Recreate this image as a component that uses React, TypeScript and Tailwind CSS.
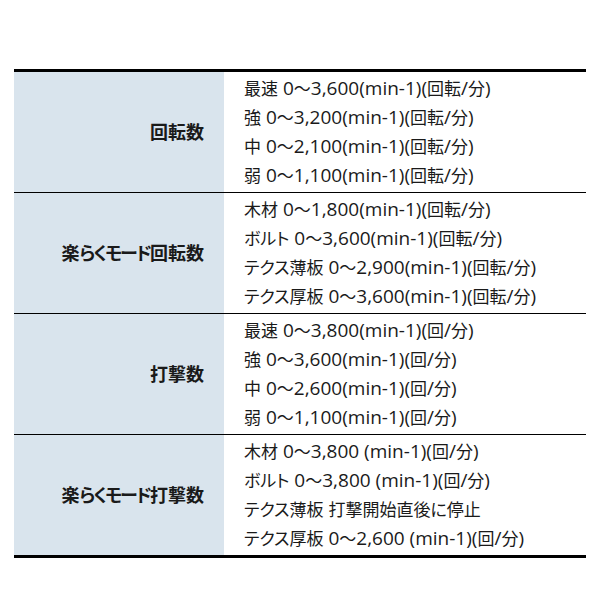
const ROWS = [
  {
    label: "回転数",
    lines: [
      "最速 0〜3,600(min-1)(回転/分)",
      "強 0〜3,200(min-1)(回転/分)",
      "中 0〜2,100(min-1)(回転/分)",
      "弱 0〜1,100(min-1)(回転/分)",
    ],
  },
  {
    label: "楽らくモード回転数",
    lines: [
      "木材 0〜1,800(min-1)(回転/分)",
      "ボルト 0〜3,600(min-1)(回転/分)",
      "テクス薄板 0〜2,900(min-1)(回転/分)",
      "テクス厚板 0〜3,600(min-1)(回転/分)",
    ],
  },
  {
    label: "打撃数",
    lines: [
      "最速 0〜3,800(min-1)(回/分)",
      "強 0〜3,600(min-1)(回/分)",
      "中 0〜2,600(min-1)(回/分)",
      "弱 0〜1,100(min-1)(回/分)",
    ],
  },
  {
    label: "楽らくモード打撃数",
    lines: [
      "木材 0〜3,800 (min-1)(回/分)",
      "ボルト 0〜3,800 (min-1)(回/分)",
      "テクス薄板 打撃開始直後に停止",
      "テクス厚板 0〜2,600 (min-1)(回/分)",
    ],
  },
];

// Japanese runs are set a little smaller than the latin ones, like Meiryo does
const CJK = /([\u3000-\u30ff\u4e00-\u9fff\uff00-\uffef]+)/;
const KANA = /([\u3040-\u30ff]+)/;

function Line({ text }: { text: string }) {
  return (
    <div className="h-[29px] leading-[29px] whitespace-pre">
      {text.split(CJK).map((part, i) =>
        part === "" ? null : CJK.test(part) ? (
          <span key={i} className="text-[17px] [font-feature-settings:'palt']">
            {part}
          </span>
        ) : (
          <span key={i} className="text-[19px]">
            {part}
          </span>
        )
      )}
    </div>
  );
}

function Label({ text }: { text: string }) {
  return (
    <span className="font-bold text-[18px] [font-feature-settings:'palt']">
      {text.split(KANA).map((part, i) =>
        part === "" ? null : KANA.test(part) ? (
          <span key={i} className="tracking-[-1.8px]">
            {part}
          </span>
        ) : (
          <span key={i}>{part}</span>
        )
      )}
    </span>
  );
}

export default function App() {
  return (
    <div className="w-[600px] h-[600px] bg-white pt-[69px] px-[14px] font-['Open_Sans','Noto_Sans_CJK_JP',sans-serif] text-[#1a1a1a]">
      <div className="border-t-[3px] border-b-[3px] border-black">
        {ROWS.map((row, i) => (
          <div
            key={row.label}
            className={`flex ${i > 0 ? "border-t border-black" : ""}`}
          >
            <div className="w-[210px] shrink-0 bg-[#d9e4ed] flex items-center justify-end pr-[20px]">
              <Label text={row.label} />
            </div>
            <div className="flex-1 pl-[20px] pt-[2px] pb-[2px]">
              {row.lines.map((line) => (
                <Line key={line} text={line} />
              ))}
            </div>
          </div>
        ))}
      </div>
    </div>
  );
}
